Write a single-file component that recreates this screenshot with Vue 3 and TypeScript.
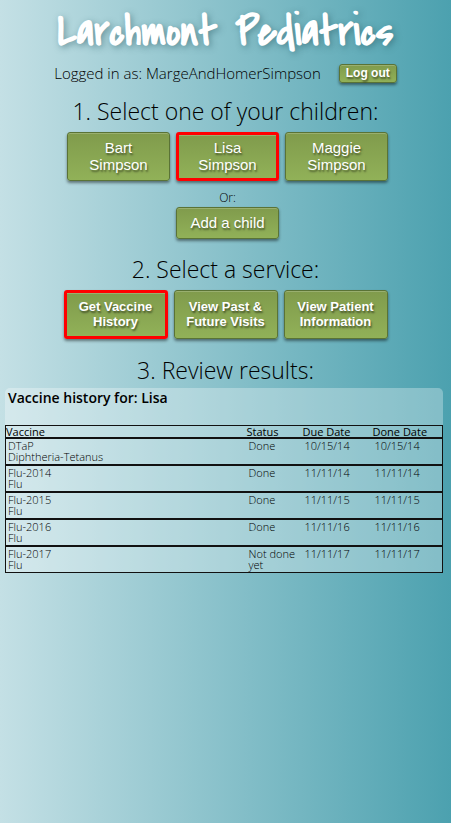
<script setup lang="ts">
import { ref } from 'vue'

interface Child {
  first: string
  last: string
}

interface Service {
  id: string
  lines: [string, string]
}

interface VaccineRecord {
  name: string
  description: string
  status: string
  due: string
  done: string
}

const userName = 'MargeAndHomerSimpson'

const children: Child[] = [
  { first: 'Bart', last: 'Simpson' },
  { first: 'Lisa', last: 'Simpson' },
  { first: 'Maggie', last: 'Simpson' },
]

const services: Service[] = [
  { id: 'history', lines: ['Get Vaccine', 'History'] },
  { id: 'visits', lines: ['View Past &', 'Future Visits'] },
  { id: 'patient', lines: ['View Patient', 'Information'] },
]

const records: VaccineRecord[] = [
  { name: 'DTaP', description: 'Diphtheria-Tetanus', status: 'Done', due: '10/15/14', done: '10/15/14' },
  { name: 'Flu-2014', description: 'Flu', status: 'Done', due: '11/11/14', done: '11/11/14' },
  { name: 'Flu-2015', description: 'Flu', status: 'Done', due: '11/11/15', done: '11/11/15' },
  { name: 'Flu-2016', description: 'Flu', status: 'Done', due: '11/11/16', done: '11/11/16' },
  { name: 'Flu-2017', description: 'Flu', status: 'Not done yet', due: '11/11/17', done: '11/11/17' },
]

const selectedChild = ref('Lisa')
const selectedService = ref('history')
</script>

<template>
  <main class="page">
    <h1 class="brand">Larchmont Pediatrics</h1>

    <div class="session">
      <span>Logged in as: {{ userName }}</span>
      <button type="button" class="btn btn-small">Log out</button>
    </div>

    <section class="step">
      <h2>1. Select one of your children:</h2>
      <div class="child-picker">
        <div class="choices">
          <button
            v-for="child in children"
            :key="child.first"
            type="button"
            class="btn btn-child"
            :class="{ selected: child.first === selectedChild }"
            :aria-pressed="child.first === selectedChild"
            @click="selectedChild = child.first"
          >
            {{ child.first }}<br />{{ child.last }}
          </button>
        </div>
        <p class="or">Or:</p>
        <button type="button" class="btn btn-add">Add a child</button>
      </div>
    </section>

    <section class="step">
      <h2>2. Select a service:</h2>
      <div class="choices">
        <button
          v-for="service in services"
          :key="service.id"
          type="button"
          class="btn btn-service"
          :class="{ selected: service.id === selectedService }"
          :aria-pressed="service.id === selectedService"
          @click="selectedService = service.id"
        >
          {{ service.lines[0] }}<br />{{ service.lines[1] }}
        </button>
      </div>
    </section>

    <section class="results">
      <h2>3. Review results:</h2>
      <div class="panel">
        <h3>Vaccine history for: {{ selectedChild }}</h3>
        <table>
          <colgroup>
            <col />
            <col class="col-status" />
            <col class="col-date" />
            <col class="col-date" />
          </colgroup>
          <thead>
            <tr>
              <th scope="col">Vaccine</th>
              <th scope="col">Status</th>
              <th scope="col">Due Date</th>
              <th scope="col">Done Date</th>
            </tr>
          </thead>
          <tbody>
            <tr v-for="record in records" :key="record.name">
              <td>{{ record.name }}<br />{{ record.description }}</td>
              <td>{{ record.status }}</td>
              <td>{{ record.due }}</td>
              <td>{{ record.done }}</td>
            </tr>
          </tbody>
        </table>
      </div>
    </section>
  </main>
</template>

<style>
body {
  margin: 0;
}
</style>

<style scoped>
.page {
  box-sizing: border-box;
  min-height: 100vh;
  padding: 4px 0 24px;
  background: linear-gradient(to right, #c4e0e5, #4ca1af);
  color: #000;
  font-family: 'Open Sans', 'Noto Sans', sans-serif;
  font-weight: 300;
  text-align: center;
}

h1,
h2,
h3,
p {
  margin: 0;
}

.brand {
  color: #fff;
  font-family: 'Covered By Your Grace', Lato, sans-serif;
  font-size: 44px;
  font-weight: 700;
  line-height: 56px;
  text-shadow: 2px 2px 6px rgba(40, 90, 100, 0.5);
}

.session {
  display: flex;
  justify-content: center;
  align-items: center;
  gap: 18px;
  font-size: 15px;
  line-height: 26px;
}

h2 {
  font-size: 23px;
  font-weight: 300;
  line-height: 32px;
}

.step h2 {
  margin-bottom: 5px;
}

.step {
  padding-top: 9px;
}

.step + .step {
  padding-top: 14px;
}

.child-picker {
  padding-left: 4px;
}

.choices {
  display: flex;
  justify-content: center;
  gap: 6px;
}

.btn {
  box-sizing: border-box;
  padding: 0 0 2px;
  border: 1px solid #5a7336;
  border-radius: 3px;
  background: linear-gradient(#809b4c, #91b158);
  box-shadow:
    0 2px 3px rgba(0, 0, 0, 0.45),
    inset 0 1px 0 rgba(255, 255, 255, 0.2);
  color: #fff;
  font-family: Arial, 'Liberation Sans', sans-serif;
  text-shadow: 1px 2px 2px rgba(0, 0, 0, 0.5);
  cursor: pointer;
}

.btn-small {
  width: 58px;
  height: 19px;
  font-size: 12px;
  font-weight: 700;
  line-height: 16px;
}

.btn-child,
.btn-add {
  width: 103px;
  font-size: 15px;
  line-height: 17px;
}

.btn-service {
  width: 104px;
  font-size: 13px;
  font-weight: 700;
  line-height: 15px;
}

.btn-child,
.btn-service {
  height: 49px;
}

.btn-add {
  height: 32px;
}

.btn.selected {
  border: 3px solid #f00;
}

.or {
  padding-top: 8px;
  font-size: 12px;
  line-height: 18px;
}

.results {
  padding-top: 15px;
}

.results h2 {
  margin-bottom: 2px;
}

.panel {
  margin: 0 8px 0 5px;
  border-radius: 5px 5px 0 0;
  background: rgba(255, 255, 255, 0.3);
  text-align: left;
}

h3 {
  padding: 0 3px 18px;
  font-size: 14px;
  font-weight: 600;
  line-height: 19px;
}

table {
  width: 100%;
  border: 1px solid #111;
  border-collapse: collapse;
  table-layout: fixed;
  font-size: 11px;
  line-height: 11px;
}

.col-status {
  width: 56px;
}

.col-date {
  width: 70px;
}

tr {
  border-bottom: 2px solid #111;
}

tbody tr:last-child {
  border-bottom-width: 1px;
}

th {
  padding: 0;
  font-weight: 500;
  text-align: left;
}

td {
  padding: 1px 0 2px 2px;
  vertical-align: top;
}
</style>
